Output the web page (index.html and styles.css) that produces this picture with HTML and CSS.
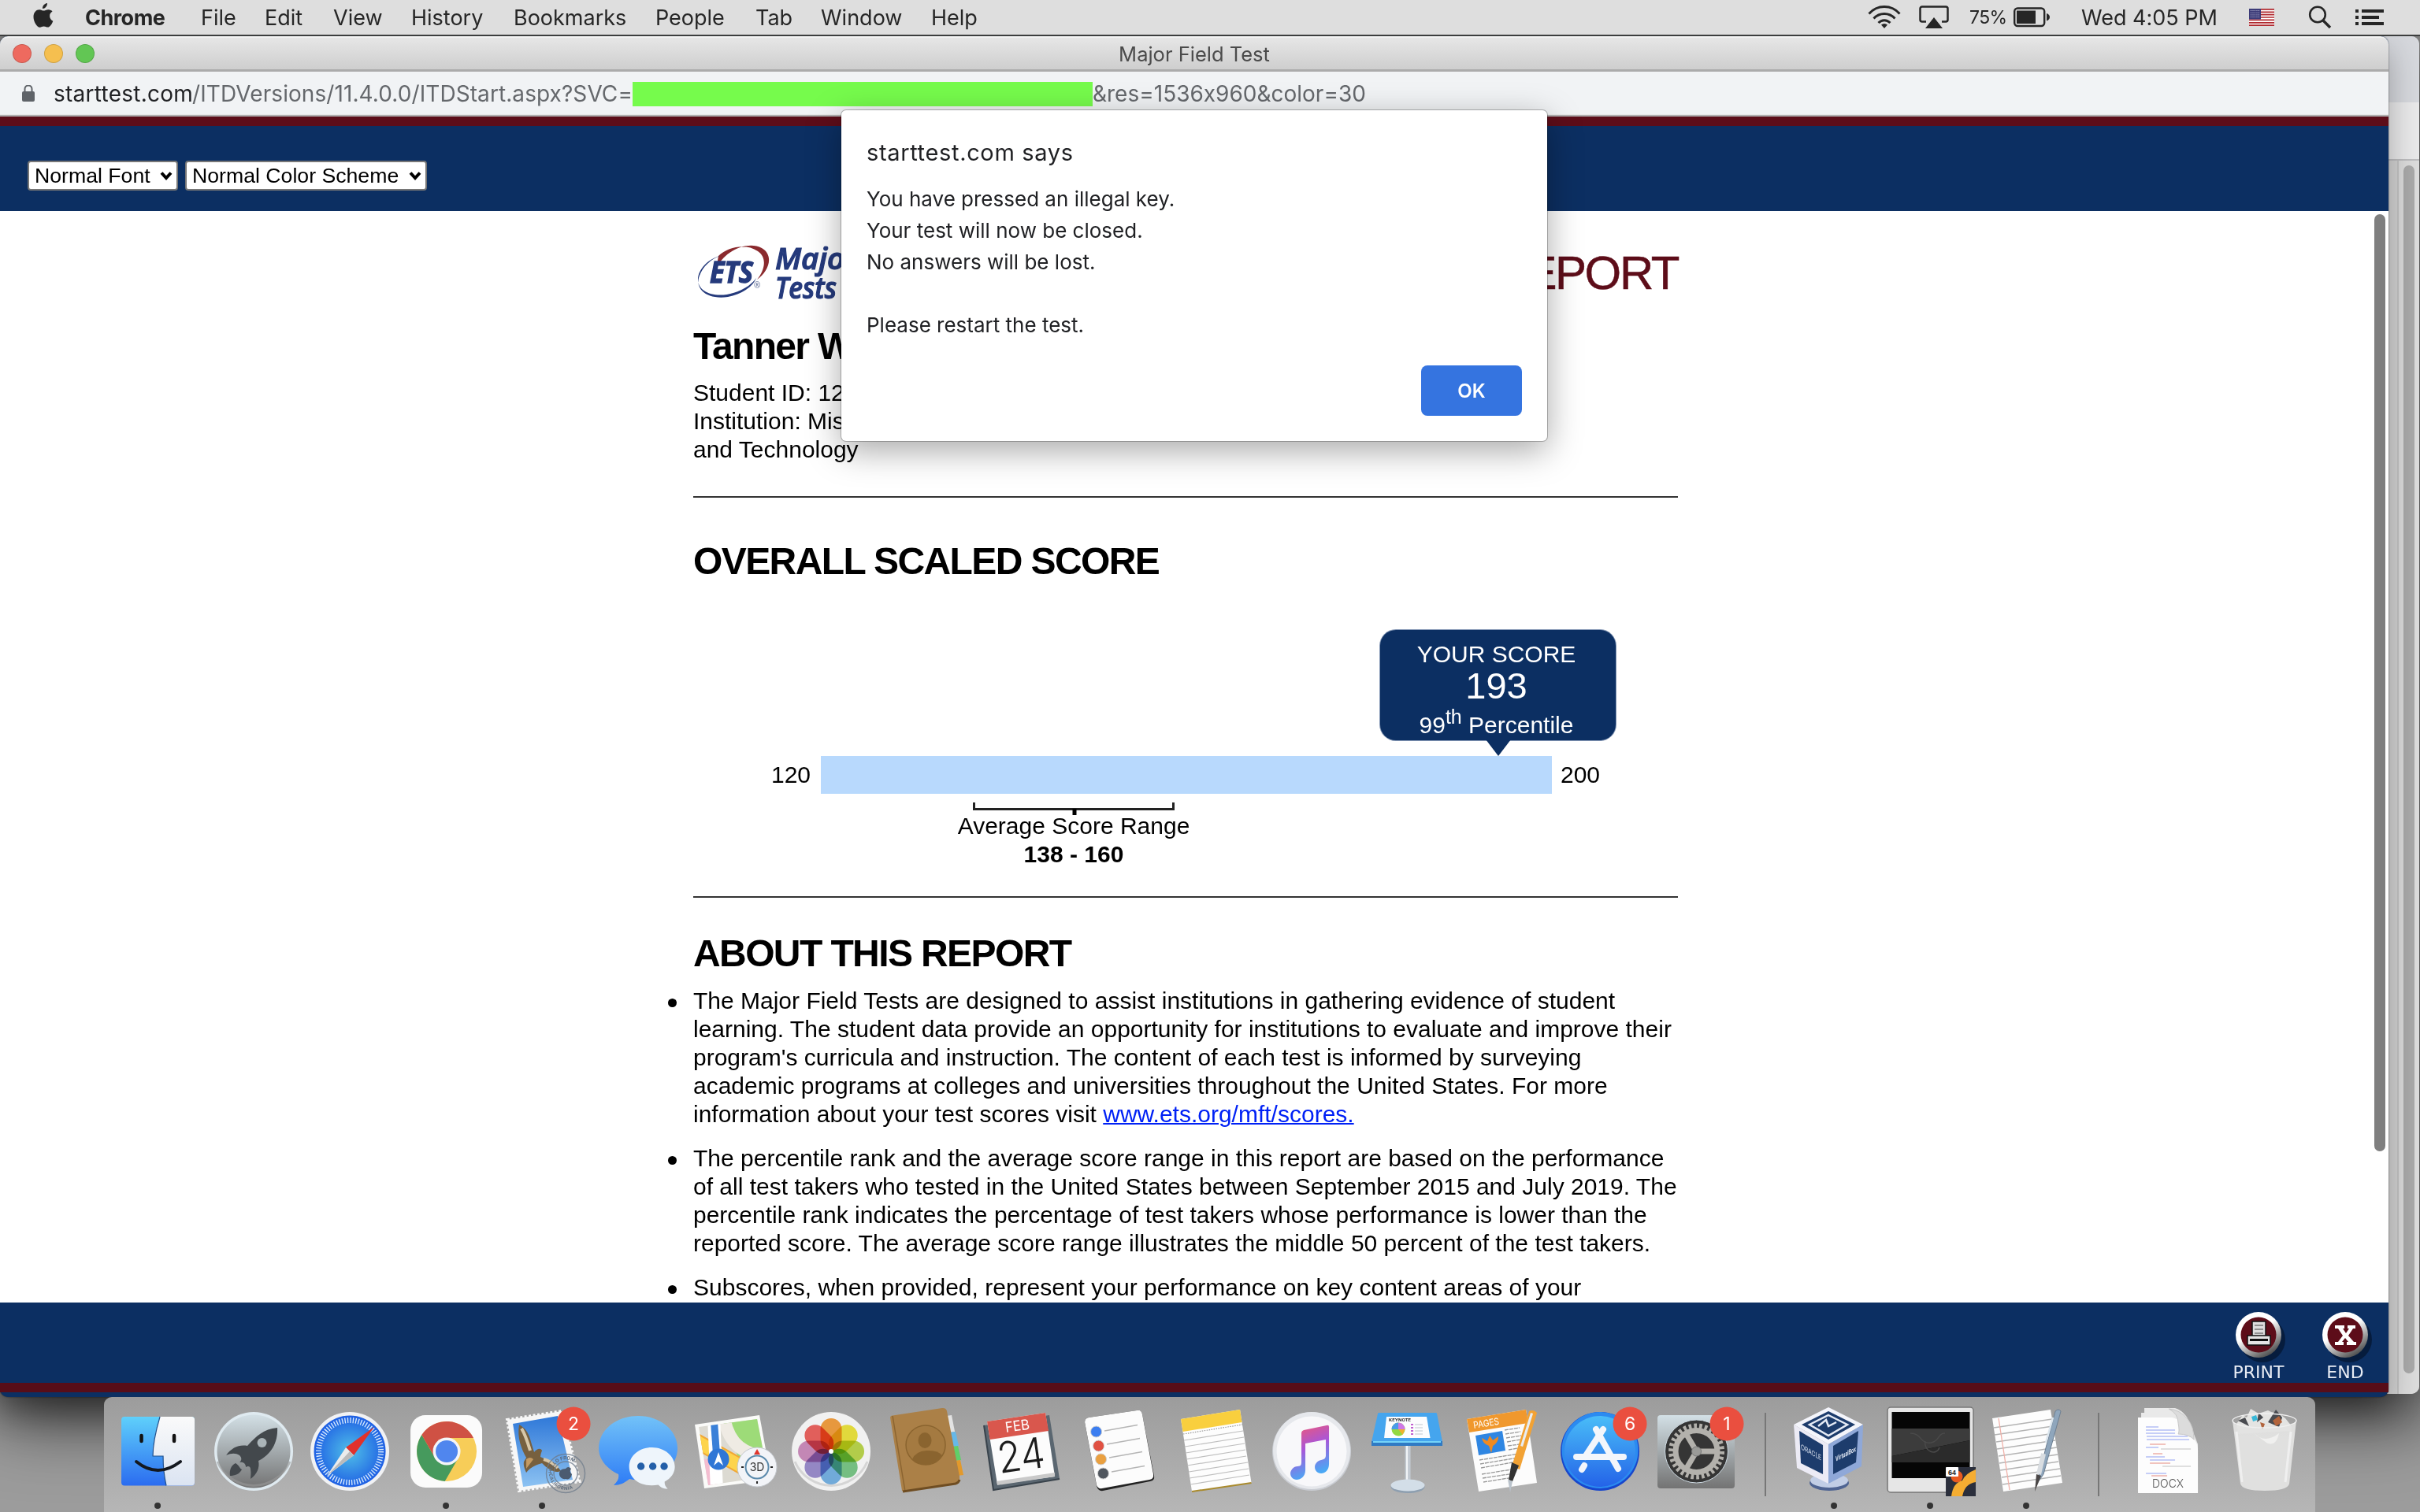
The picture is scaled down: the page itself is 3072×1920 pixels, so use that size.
FILE: index.html
```html
<!DOCTYPE html>
<html lang="en">
<head>
<meta charset="utf-8">
<title>Major Field Test</title>
<link rel="stylesheet" href="styles.css">
</head>
<body>
<header class="menubar">
  <svg class="apple" width="28" height="33" viewBox="0 0 28 33"><path d="M19 1c.2 3.600-2.600 7-6 7C12.700 4.500 15.600 1.300 19 1zM25.500 11.500c-2.200 1.400-3.500 3.300-3.400 6 .1 3 1.800 5 4.200 6.200-1.100 3.200-3.800 7.800-6.600 7.900-1.900.1-2.700-1.100-5-1.100s-3.200 1.100-5 1.200C5.800 31.800 1.500 24.500 1.500 18.500 1.500 12.500 5.200 9.200 9 9.200c2.200 0 3.800 1.400 5.400 1.400 1.500 0 3.400-1.500 6.200-1.400 2.100.1 3.900.9 4.900 2.300z" fill="#262626"/></svg>
  <nav class="menus">
    <span class="menu app">Chrome</span><span class="menu file">File</span><span class="menu edit">Edit</span><span class="menu view">View</span><span class="menu history">History</span><span class="menu bookmarks">Bookmarks</span><span class="menu people">People</span><span class="menu tab">Tab</span><span class="menu win">Window</span><span class="menu help">Help</span>
  </nav>
  <div class="status">
    <svg class="wifi" width="42" height="30" viewBox="0 0 42 30" fill="none" stroke="#262626" stroke-width="3"><path d="M1.500 10.500C12-1.500 30-1.500 40.500 10.500"/><path d="M7.500 16.500c7.500-8 19.500-8 27 0"/><path d="M13.500 22c4.500-4.500 10.500-4.500 15 0"/><path d="M21 29l-4-4.500q4-3 8 0z" fill="#262626" stroke="none"/></svg>
    <svg class="airplay" width="38" height="30" viewBox="0 0 38 30"><path d="M9 20.500H4a2.500 2.500 0 0 1-2.500-2.500V4A2.500 2.500 0 0 1 4 1.500h30A2.500 2.500 0 0 1 36.500 4v14a2.500 2.500 0 0 1-2.500 2.500h-5" fill="none" stroke="#262626" stroke-width="2.500"/><path d="M19 15l11 14H8z" fill="#262626"/></svg>
    <span class="percent">75%</span>
    <svg class="battery" width="46" height="26" viewBox="0 0 46 26"><rect x="1.200" y="1.500" width="38" height="22.500" rx="4" fill="none" stroke="#262626" stroke-width="2.400"/><rect x="4" y="4.500" width="24" height="16.500" fill="#262626"/><path d="M42 8q4 1.500 4 4.800T42 17.500z" fill="#262626"/></svg>
    <span class="clock">Wed 4:05 PM</span>
    <svg class="flag" width="32" height="22" viewBox="0 0 32 22"><rect width="32" height="22" fill="#fff"/><path d="M0 .9h32M0 4.300h32M0 7.700h32M0 11h32M0 14.400h32M0 17.800h32M0 21.100h32" stroke="#b0282e" stroke-width="1.700"/><rect width="15" height="13.500" fill="#3c3b78"/><path d="M2 2.500h12M2 5.200h12M2 7.900h12M2 10.600h12" stroke="#c9c9e0" stroke-width="1" stroke-dasharray="1 1.500"/></svg>
    <svg class="search" width="30" height="30" viewBox="0 0 30 30" fill="none" stroke="#262626"><circle cx="12" cy="11.500" r="9.800" stroke-width="2.600"/><path d="M19 19l9 9" stroke-width="3.400"/></svg>
    <svg class="list" width="36" height="22" viewBox="0 0 36 22" fill="#262626"><path d="M0 1h4v4H0zM8 1h28v4H8zM0 9h4v4H0zM8 9h22v4H8zM0 17h4v4H0zM8 17h28v4H8z"/></svg>
  </div>
</header>

<main class="desktop">
  <section class="window back-window">
    <div class="back-tabs"></div>
    <div class="back-tools"></div>
    <div class="back-body"><div class="back-track"><div class="back-thumb"></div></div></div>
  </section>

  <section class="window test-window">
    <div class="titlebar">
      <i class="light red"></i><i class="light yellow"></i><i class="light green"></i>
      <h1 class="window-title">Major Field Test</h1>
    </div>
    <div class="address">
      <svg class="lock" width="16" height="22" viewBox="0 0 16 22"><rect y="8" width="16" height="13" rx="2" fill="#5f6368"/><path d="M3.500 9V5a4.500 4.500 0 0 1 9 0v4" fill="none" stroke="#5f6368" stroke-width="2"/></svg>
      <span class="host">starttest.com</span><span class="path">/ITDVersions/11.4.0.0/ITDStart.aspx?SVC=</span><span class="redacted"></span><span class="query">&amp;res=1536x960&amp;color=30</span>
    </div>
    <div class="test-top">
      <div class="select font-select">Normal Font<svg width="16" height="12" viewBox="0 0 16 12"><path d="M2 2.500l6 6.500 6-6.500" fill="none" stroke="#000" stroke-width="4"/></svg></div>
      <div class="select color-select">Normal Color Scheme<svg width="16" height="12" viewBox="0 0 16 12"><path d="M2 2.500l6 6.500 6-6.500" fill="none" stroke="#000" stroke-width="4"/></svg></div>
    </div>
    <div class="page">
      <article class="report">
        <div class="report-head">
          <svg class="logo" width="260" height="80" viewBox="0 0 260 80">
            <path d="M24 42C32 18 64 4 82 14c16 9 9 30-6 40 10-12 13-28 1-36C62 8 40 12 27 24z" fill="#8b2a2e" transform="translate(5 -7)"/>
            <path d="M34 18C18 22 6 36 6 48c0 20 34 28 64 8 4-3 8-7 10-10-4 11-19 21-36 24C18 74 1 60 8 43c4-11 14-21 26-25z" fill="#253a7c" transform="translate(0 -1)"/>
            <text x="21" y="51" class="ets" textLength="55" lengthAdjust="spacingAndGlyphs">ETS</text>
            <text x="77" y="58" class="reg">®</text>
            <text x="104" y="34" class="mft" textLength="104" lengthAdjust="spacingAndGlyphs">Major</text>
            <text x="104" y="71" class="mft" textLength="78" lengthAdjust="spacingAndGlyphs">Tests</text>
          </svg>
          <span class="report-word">REPORT</span>
        </div>
        <h2 class="student">Tanner W</h2>
        <p class="details">Student ID: 12<br>Institution: Mis<br>and Technology</p>
        <hr>
        <h2 class="overall">OVERALL SCALED SCORE</h2>
        <div class="chart">
          <div class="bubble">
            <p>YOUR SCORE</p>
            <p class="score">193</p>
            <p class="rank">99<sup>th</sup> Percentile</p>
            <svg class="pointer" width="32" height="21" viewBox="0 0 32 21"><path d="M0 0h32L16 21z" fill="#0c2f62"/></svg>
          </div>
          <div class="scale"><span class="low">120</span><div class="bar"></div><span>200</span></div>
          <div class="range">
            <svg width="256" height="16" viewBox="0 0 256 16"><path d="M1.500 0v8.500h253V0" fill="none" stroke="#222" stroke-width="3"/><path d="M129 8v8" stroke="#000" stroke-width="5"/></svg>
            <p>Average Score Range</p>
            <p class="range-values">138 - 160</p>
          </div>
        </div>
        <hr>
        <h2 class="about">ABOUT THIS REPORT</h2>
        <ul>
          <li>The Major Field Tests are designed to assist institutions in gathering evidence of student<br>learning. The student data provide an opportunity for institutions to evaluate and improve their<br>program's curricula and instruction. The content of each test is informed by surveying<br>academic programs at colleges and universities throughout the United States. For more<br>information about your test scores visit <a href="#">www.ets.org/mft/scores.</a></li>
          <li>The percentile rank and the average score range in this report are based on the performance<br>of all test takers who tested in the United States between September 2015 and July 2019. The<br>percentile rank indicates the percentage of test takers whose performance is lower than the<br>reported score. The average score range illustrates the middle 50 percent of the test takers.</li>
          <li>Subscores, when provided, represent your performance on key content areas of your</li>
        </ul>
      </article>
      <div class="page-thumb"></div>
    </div>
    <div class="test-bottom">
      <div class="round print">
        <svg width="72" height="70" viewBox="-36 -32 72 70">
          <defs><linearGradient id="rim" x1="0" y1="0" x2=".6" y2="1"><stop offset=".5" stop-color="#fff"/><stop offset="1" stop-color="#555"/></linearGradient></defs>
          <ellipse cx="5" cy="6" rx="29" ry="29" fill="#04142e" opacity=".7"/>
          <circle r="29" fill="url(#rim)"/><circle r="22.500" fill="#5d0d19"/>
          <rect x="-8" y="-17" width="17" height="19" fill="#ddd" stroke="#111" stroke-width="1.500"/><path d="M-5-12H6M-5-7H6M-5-2H6" stroke="#777" stroke-width="1.500"/>
          <rect x="-14" y="1" width="29" height="12" fill="#e4e4e4" stroke="#111" stroke-width="1.500"/><path d="M-11 6.500h23" stroke="#111" stroke-width="3"/>
        </svg>
        <span>PRINT</span>
      </div>
      <div class="round end">
        <svg width="72" height="70" viewBox="-36 -32 72 70">
          <ellipse cx="5" cy="6" rx="29" ry="29" fill="#04142e" opacity=".7"/>
          <circle r="29" fill="url(#rim)"/><circle r="22.500" fill="#5d0d19"/>
          <path d="M-13-12H-1v4h-2l4 6 4-6H3v-4h10v4h-3L4 1l7 8h3v4H2V9h2L0 4l-4 5h2v4h-11V9h4l6-8-6-9h-4z" fill="#fff"/>
        </svg>
        <span>END</span>
      </div>
    </div>
    <div class="test-stripe"></div>

    <div class="dialog" role="alertdialog">
      <h3>starttest.com says</h3>
      <p>You have pressed an illegal key.<br>Your test will now be closed.<br>No answers will be lost.<br><br>Please restart the test.</p>
      <button class="ok">OK</button>
    </div>
  </section>
</main>

<footer class="dock">
  <svg class="slot" viewBox="-61 0 122 146">
    <defs>
      <linearGradient id="finder" x1="0" y1="0" x2="0" y2="1"><stop offset="0" stop-color="#5fd0fb"/><stop offset="1" stop-color="#2b6cf0"/></linearGradient>
      <linearGradient id="white" x1="0" y1="0" x2="0" y2="1"><stop offset="0" stop-color="#fafafa"/><stop offset="1" stop-color="#dbe4f2"/></linearGradient>
      <linearGradient id="steel" x1="0" y1="0" x2="0" y2="1"><stop offset="0" stop-color="#d3e0e6"/><stop offset="1" stop-color="#737373"/></linearGradient>
      <linearGradient id="chat" x1="0" y1="0" x2="0" y2="1"><stop offset="0" stop-color="#72c2f8"/><stop offset="1" stop-color="#2e7cf6"/></linearGradient>
      <linearGradient id="store" x1="0" y1="0" x2="0" y2="1"><stop offset="0" stop-color="#49bdf8"/><stop offset="1" stop-color="#2463e8"/></linearGradient>
      <linearGradient id="note" x1="0" y1="0" x2=".3" y2="1"><stop offset="0" stop-color="#f7576b"/><stop offset=".5" stop-color="#a956d8"/><stop offset="1" stop-color="#4aa8f5"/></linearGradient>
      <linearGradient id="sky" x1="0" y1="0" x2="0" y2="1"><stop offset="0" stop-color="#2f78d8"/><stop offset="1" stop-color="#8cc2f2"/></linearGradient>
      <radialGradient id="compass"><stop offset="0" stop-color="#50c0e8"/><stop offset="1" stop-color="#1f60e4"/></radialGradient>
    </defs>
    <rect x="-46" y="25" width="93" height="87.500" rx="4" fill="url(#finder)"/>
    <path d="M3 25C-2 42-6 58-6 75H7q0 20 4 37.500h32a4 4 0 0 0 4-4V29a4 4 0 0 0-4-4z" fill="url(#white)"/>
    <path d="M3 25C-2 42-6 58-6 75H7q0 20 4 37.500" fill="none" stroke="#24528c" stroke-width="1.200"/>
    <path d="M-20.500 49v7M21 49v7" stroke="#111" stroke-width="4.500" stroke-linecap="round"/>
    <path d="M-27 82Q0 104 29 82" fill="none" stroke="#14181f" stroke-width="4" stroke-linecap="round"/>
    <circle cy="138" cx="0" r="4" fill="#333"/>
  </svg>
  <svg class="slot" viewBox="-61 0 122 146">
    <circle cy="69" r="50" fill="#dfeaf0"/><circle cy="69" r="46.500" fill="url(#steel)"/><path d="M-46 82A50 50 0 0 0 46 82" fill="none" stroke="#999" stroke-width="3" opacity=".6"/>
    <path d="M30 39C12 41 4 49-8 62c-10-2-20 2-27 12 7-3 12-3 17 0 3 3 3 6 0 9 5-1 8 2 8 6 3-2 6-1 6 3 1 5 0 8 0 12 8-6 12-14 10-23C22 73 31 58 30 39z" fill="#43484c"/>
    <path d="M-23 84c-6 3-8 9-7 16 6 0 12-2 15-8-3-1-3-5-8-8z" fill="#43484c"/><circle cx="10.500" cy="58" r="6" fill="#aab4b8"/>
  </svg>
  <svg class="slot" viewBox="-61 0 122 146">
    <circle cy="69" r="50" fill="#f1f2f4"/><circle cy="69" r="45.500" fill="url(#compass)"/>
    <circle cy="69" r="39.500" fill="none" stroke="#dcecff" stroke-width="7" stroke-dasharray="1.300 2.147"/>
    <path d="M31 38L-5 64l10 10z" fill="#e0312c"/><path d="M-29 100l24-36 10 10z" fill="#ececec"/><path d="M-29 100L0 69l5 5z" fill="#bbb"/>
  </svg>
  <svg class="slot" viewBox="-61 0 122 146">
    <rect x="-45" y="23" width="91" height="92" rx="19" fill="#fbfbfb"/>
    <g transform="translate(1 69)"><circle r="38" fill="#f7cd58"/><path d="M-31.700-20.900A38 38 0 0 0-2.300 37.900L14.700 8.500-14.700 8.500z" fill="#469a5d"/><path d="M-31.700-20.900A38 38 0 0 1 34-17H0V8.500H-14.700z" fill="#cf5144"/><circle r="17.500" fill="#f4f5f8"/><circle r="14" fill="#5086ee"/></g>
    <circle cy="138" r="4" fill="#333"/>
  </svg>
  <svg class="slot" viewBox="-61 0 122 146">
    <path d="M-44 29L25 18 47.500 107-29 119z" fill="#f7f7f7" stroke="#f7f7f7" stroke-width="4" stroke-dasharray="3 2.500"/>
    <path d="M-37 34L20 24l19 81-63 9z" fill="url(#sky)"/>
    <path d="M-29 35c9 5 13 13 15 22l4 13c3-4 8-6 10-2-1 3-2 5-2 8 10 5 20 9 26 18-8 3-16-2-24-10-6 2-14 4-20 12-2-5-4-9-3-14l3-5C-26 66-32 52-29 35z" fill="#77603f"/><path d="M-26 40c5 8 8 18 11 28M2 79c8 2 13 6 18 11" stroke="#d8c7a8" stroke-width="4" fill="none"/><path d="M-20 79q5-4 9 0l-9 12z" fill="#c49a62"/>
    <g fill="none" stroke="#6d7a8a" stroke-width="1.500" opacity=".75"><circle cx="30" cy="97" r="24.500"/><circle cx="30" cy="97" r="15"/><path id="mark" d="M12 97a18 18 0 0 0 36 0" stroke="none"/><path id="mark2" d="M12.500 97a17 17 0 0 1 35 0" stroke="none"/></g>
    <text class="postmark" dy="3"><textPath href="#mark">CALIFORNIA</textPath></text><text class="postmark"><textPath href="#mark2">HELLO FROM</textPath></text>
    <path d="M30 91q3-4 7 0-3 4 1 7-2 8-8 6-6 1-8-5-1-8 8-8z" fill="#4b5b70"/>
    <circle cx="40" cy="34" r="21.500" fill="#ea4f3f"/><text class="badge" x="40" y="42">2</text>
    <circle cy="138" r="4" fill="#333"/>
  </svg>
  <svg class="slot" viewBox="-61 0 122 146">
    <path d="M0 24c28 0 50 18 50 41S28 105 0 105c-4 0-8 0-11-1-6 5-12 8-20 8 5-5 7-9 6-14C-40 91-50 79-50 65-50 42-28 24 0 24z" fill="url(#chat)"/>
    <path d="M17.600 64c16 0 29 11 29 24.500 0 8-5 15-13 19 0 4 1 6 4 9-6 0-9-2-12-5-24 4-37-9-37-23S1.600 64 17.600 64z" fill="#eef5fb"/>
    <circle cx="3.600" cy="88" r="4.700" fill="#235fa8"/><circle cx="18.600" cy="88" r="4.700" fill="#235fa8"/><circle cx="33" cy="88" r="4.700" fill="#235fa8"/>
  </svg>
  <svg class="slot" viewBox="-61 0 122 146">
    <clipPath id="mapclip"><path d="M-46 38L28 28l14 73-76 11z"/></clipPath>
    <path d="M-51 35L31 23l15 82-85 11z" fill="#fbfbf9"/>
    <g clip-path="url(#mapclip)"><path d="M-51 20h110v100H-51z" fill="#dcdad2"/><path d="M-20 20H60V90L10 90z" fill="#9ddb78"/><path d="M-14 26C-8 60 10 74 50 78" fill="none" stroke="#efebe4" stroke-width="16"/><path d="M-60 50L40 106" stroke="#f1a735" stroke-width="20"/><path d="M-60 50L40 106" stroke="#fdd44c" stroke-width="16"/><path d="M-44 78l18 2 3 40h-18z" fill="#f3bdd0"/><path d="M-27 25l4 95" stroke="#fff" stroke-width="16"/><path d="M-27 25l4 55" stroke="#3a80d8" stroke-width="9"/></g>
    <circle cx="-21" cy="79" r="13.500" fill="#2f76d6"/><path d="M-21 70l6 17-6-5-6 5z" fill="#fff"/>
    <circle cx="28" cy="89" r="25" fill="#f2f4f8" stroke="#c4c8ce"/><circle cx="28" cy="89" r="14.500" fill="none" stroke="#5b8aac" stroke-width="2"/><path d="M28 66l4 7h-8z" fill="#e0362c"/><path d="M8 89h3M45 89h3M28 107v3" stroke="#222" stroke-width="2"/><text class="threed" x="28" y="94">3D</text>
  </svg>
  <svg class="slot" viewBox="-61 0 122 146">
    <circle cy="69" r="50" fill="#f1f1f1"/><path d="M-46 82A50 50 0 0 0 46 82" fill="none" stroke="#d5d5d5" stroke-width="3"/>
    <g class="petals" transform="translate(0 69)"><rect x="-13.500" y="-42" width="27" height="41" rx="13.500" fill="#f5a141"/><rect x="-13.500" y="-42" width="27" height="41" rx="13.500" fill="#efe63f" transform="rotate(45)"/><rect x="-13.500" y="-42" width="27" height="41" rx="13.500" fill="#bdd84e" transform="rotate(90)"/><rect x="-13.500" y="-42" width="27" height="41" rx="13.500" fill="#7cc98a" transform="rotate(135)"/><rect x="-13.500" y="-42" width="27" height="41" rx="13.500" fill="#78b4e6" transform="rotate(180)"/><rect x="-13.500" y="-42" width="27" height="41" rx="13.500" fill="#9d8fd0" transform="rotate(225)"/><rect x="-13.500" y="-42" width="27" height="41" rx="13.500" fill="#cf8fc0" transform="rotate(270)"/><rect x="-13.500" y="-42" width="27" height="41" rx="13.500" fill="#ee6460" transform="rotate(315)"/></g>
    <circle cy="69" r="3" fill="#fff"/>
  </svg>
  <svg class="slot" viewBox="-61 0 122 146">
    <path d="M24 24l7-1 4 21-7 1z" fill="#e3e3e3"/><path d="M28 45l8-1 4 18-8 1z" fill="#66b8e8"/><path d="M31 63l8-1 4 18-8 1z" fill="#60cf68"/><path d="M34 81l8-1 4 19-8 1z" fill="#e2992c"/>
    <path d="M-47 26q0-2 3-2.500L19 14q5-.5 6 4l16 83q1 7-5 9l-66 10-2-1z" fill="#ab8047"/><path d="M-44 24l16 96" stroke="#8b6431" stroke-width="1.500"/><path d="M-31 120l67-10q4-1 5-5" fill="none" stroke="#6f4d22" stroke-width="3"/>
    <circle cx="-2" cy="61" r="25" fill="#a47a41" stroke="#8a642f" stroke-width="1.500"/><ellipse cx="-3" cy="55" rx="8.500" ry="10" fill="#8a642f"/><path d="M-19 79q4-10 18-11t20 6q-8 11-20 12-12 0-18-7z" fill="#8a642f"/>
  </svg>
  <svg class="slot" viewBox="-61 0 122 146">
    <path d="M-50 36l83-13 13 81-84 14z" fill="#5a6670"/><path d="M-50 36l12 82 84-14" fill="none" stroke="#39434c" stroke-width="2"/>
    <path d="M-46 31l74-11 12 81-73 10z" fill="#fcfcfc"/><path d="M-34 107l74-11v5l-73 11z" fill="#c9c9c9"/><path d="M-46 31l74-11 4 23-74.500 11z" fill="#d9574d"/>
    <text class="month" transform="translate(-22 45) rotate(-8)" textLength="31" lengthAdjust="spacingAndGlyphs">FEB</text><text class="day" transform="translate(-30 97) rotate(-8)" textLength="60" lengthAdjust="spacingAndGlyphs">24</text>
  </svg>
  <svg class="slot" viewBox="-61 0 122 146">
    <path d="M-44 32q0-5 5-6l61-9q6-1 7 5l15 78q1 6-5 7l-60 12q-6 1-8-6z" fill="#222"/><path d="M-44 32q0-5 5-6l61-9q6-1 7 5l14 76q1 6-5 7l-60 11q-5 1-7-4z" fill="#fcfcfc"/>
    <g stroke="#d0d0d0" stroke-width="1"><circle cx="-29.500" cy="44" r="7" fill="#3c7ef0"/><circle cx="-26.500" cy="62" r="7" fill="#e05142"/><circle cx="-23.500" cy="79" r="7" fill="#eaa040"/><circle cx="-20.600" cy="97" r="7" fill="#50565e"/></g>
    <path d="M-19 43l42-7.500M-16 60l42-7.500M-13 77l42-7.500M-10 95l42-7.500" stroke="#b5b5b5" stroke-width="1.300"/>
  </svg>
  <svg class="slot" viewBox="-61 0 122 146">
    <path d="M-44 28l75-12 14.500 93L-30 120z" fill="#fdfdfd"/><path d="M-44 28l75-12 2.500 16-75 12z" fill="#f9cf3e"/><path d="M-30 120l75.500-11" stroke="#a98a2c" stroke-width="2"/>
    <path d="M-41 47l75-12" stroke="#999" stroke-width="1.200" stroke-dasharray="1.500 1.500"/><path d="M-40 55l75-12M-39 63l75-12M-38 71l75-12M-37 79l75-12M-36 87l75-12M-34 95l75-12M-33 103l75-12M-32 111l75-12" stroke="#bfbfbf" stroke-width="1.200"/>
  </svg>
  <svg class="slot" viewBox="-61 0 122 146">
    <circle cy="69" r="50" fill="#c9ccd2"/><circle cy="68" r="49" fill="#e6e8ec"/><circle cy="69" r="44.500" fill="#f8f8fa"/>
    <path d="M-13 46q0-3 3-4l29-6q3-1 3 2v47c0 8-5 12-10 12s-8-4-8-8 3-8 8-9 6-3 6-7V54l-26 5v34c0 8-6 12-11 12s-8-4-8-8 4-9 9-9 5-3 5-6z" fill="url(#note)"/>
  </svg>
  <svg class="slot" viewBox="-61 0 122 146">
    <rect x="-3.500" y="60" width="7" height="54" fill="#c3cad2"/><path d="M-1 60v54" stroke="#f2f5f8" stroke-width="2"/><ellipse cy="114" rx="21.500" ry="8" fill="#8e9fb0"/><ellipse cy="112" rx="21.500" ry="7.500" fill="#d3dee8"/>
    <path d="M-38 21q0-1 2-1h71q2 0 2 1l7 36v5H-46v-5z" fill="#45a5ee"/><path d="M-46 56h90v6H-46z" fill="#2f7ac4"/><path d="M-44 57h86" stroke="#74d3f8" stroke-width="2"/>
    <path d="M-27 25h51l4.500 27H-30z" fill="#fcfdfe"/><text class="keynote" x="-24" y="31" textLength="28" lengthAdjust="spacingAndGlyphs">KEYNOTE</text>
    <circle cx="-12" cy="41" r="8.500" fill="#93d940"/><path d="M-12 41v-8.500a8.500 8.500 0 0 0-8.500 8.500z" fill="#4b9be8"/><path d="M-12 41v-8.500a8.500 8.500 0 0 1 8.500 8.500z" fill="#cf79e6"/><path d="M-12 41h8.500l-3 7z" fill="#f0b02d"/><path d="M4 35h3M4 39h3M4 43h3M4 47h3" stroke="#c060d0" stroke-width="2"/><path d="M9 35h10M9 39h10M9 43h10M9 47h10" stroke="#c0c7cf"/>
  </svg>
  <svg class="slot" viewBox="-61 0 122 146">
    <path d="M-47 28l75-12 14 93-74 11z" fill="#fcfcfc"/><path d="M-47 28l75-12 3 17-75 12z" fill="#f0982d"/><text class="pages" transform="translate(-38 40) rotate(-9)" textLength="33" lengthAdjust="spacingAndGlyphs">PAGES</text>
    <path d="M-36 49l34-6 4 25-34 6z" fill="#2f86e2"/><path d="M-28 52l7 4 3-7 4 6 7-5q0 8-7 12l-2 9-3-9q-8-3-9-10z" fill="#f08a20"/>
    <path d="M1 42l19-3M2 47l19-3M3 52l19-3M4 57l17-3M5 62l15-2M6 67l12-2M-31 80l50-8M-30 85l48-8M-29 90l46-8M-28 98l44-7M-27 103l40-6M-26 108l38-6" stroke="#999" stroke-width="1.300" stroke-dasharray="5 1"/>
    <path d="M32 18q6-3 10 2L20 92l-10-4z" fill="#f2a234"/><path d="M34 20L21 62l3 1 13-42z" fill="#e8edf2"/><path d="M19 87l-9-4-4 22 5 2z" fill="#333"/><path d="M5 105l6 2-3 14z" fill="#b9c2cb"/>
  </svg>
  <svg class="slot" viewBox="-61 0 122 146">
    <circle cy="69" r="50" fill="#1746cc"/><circle cy="67.500" r="48.500" fill="#2b8bf0"/><circle cy="69" r="45" fill="url(#store)"/>
    <g stroke="#f3f6fb" stroke-width="8" stroke-linecap="round"><path d="M-30 76h60"/><path d="M4 41l-23 35"/><path d="M-5 41l28 50"/><path d="M-20 87l-3 5"/></g>
    <circle cx="38" cy="34" r="21.500" fill="#ea4f3f"/><text class="badge" x="38" y="42">6</text>
  </svg>
  <svg class="slot" viewBox="-61 0 122 146">
    <rect x="-50" y="23" width="98" height="93" rx="4" fill="url(#steel)"/><circle cx="-.5" cy="69" r="40" fill="#353535" stroke="#cfdbe3" stroke-width="1"/>
    <g transform="translate(-.5 69)" stroke="#b3b1ac" fill="none"><circle r="32" stroke-width="7" stroke-dasharray="3.600 3.100"/><circle r="26.500" stroke-width="7"/><path d="M0 0h26M0 0l-13-22M0 0l-13 22" stroke-width="7"/><circle r="6" fill="#9b9b98" stroke="#777" stroke-width="1"/></g>
    <circle cx="38" cy="34" r="21.500" fill="#ea4f3f"/><text class="badge" x="38" y="42">1</text>
  </svg>
  <i class="divider"></i>
  <svg class="slot" viewBox="-61 0 122 146">
    <ellipse cx="-6" cy="109" rx="25" ry="10" fill="#4f6492"/><ellipse cx="-6" cy="106" rx="24" ry="9" fill="#c2cee6"/>
    <path d="M-7 13l44 22-44 25-44-25z" fill="#f4f5fb"/><path d="M-51 35l44 25v50l-40-20z" fill="#ecebf5"/><path d="M37 35L-7 60v50l42-22z" fill="#8fa8d8"/>
    <path d="M-7 18l34 17-34 19-34-19z" fill="#1d3c6c"/><path d="M-44 43l30 18v37l-28-14z" fill="#1d3c6c"/><path d="M31 43L-1 62v36l29-15z" fill="#1d3c6c"/>
    <path d="M-7 23l24 12-24 14-24-14zM-20 37l10-8 3 8 10-5" fill="none" stroke="#e6ebf5" stroke-width="2.500"/>
    <text class="oracle" transform="translate(-42 66) skewY(29)" textLength="26" lengthAdjust="spacingAndGlyphs">ORACLE</text><text class="vbox" transform="translate(2 82) skewY(-27)" textLength="26" lengthAdjust="spacingAndGlyphs">VirtualBox</text>
    <circle cy="138" r="4" fill="#333"/>
  </svg>
  <svg class="slot" viewBox="-61 0 122 146">
    <rect x="-54" y="13" width="109" height="108" rx="4" fill="#e6e6e6" stroke="#777" stroke-width="1.500"/><rect x="-48.500" y="19" width="99" height="84" fill="#060606"/><path d="M-48.500 40h99v15l-99 20z" fill="#3c3c3c"/><path d="M-48.500 75l99-20v28h-99z" fill="#2b2b2b"/><path d="M-25 46c15 0 12 14 26 12 12-2 8-12 18-12M-6 56c-3 12 14 20 18 8" fill="none" stroke="#4a4a4a" stroke-width="1.500"/>
    <rect x="20" y="89" width="38" height="37" fill="#2b2f3c"/><circle cx="34" cy="101" r="7.500" fill="#e85a20"/><path d="M58 92v16q-14 2-17 18H27q2-17 14-20 4-9 17-14z" fill="#f5ad32"/><rect x="20" y="89" width="16" height="12" rx="1" fill="#fff"/><text class="bits" x="28" y="99">64</text>
    <circle cy="138" r="4" fill="#333"/>
  </svg>
  <svg class="slot" viewBox="-61 0 122 146">
    <path d="M-43 27l74-11 15 93-75 11z" fill="#fdfdfd"/><path d="M-41 39l74-11M-40 48l74-11M-38 57l74-11M-37 66l74-11M-35 75l74-11M-34 84l74-11M-33 93l74-11M-31 102l74-11M-30 111l74-11" stroke="#b4b4b4" stroke-width="1.300"/><path d="M-35 27l14 91" stroke="#efb0a8" stroke-width="1.300"/>
    <path d="M37 18q4-4 7 0L22 98l-9 13z" fill="#8fa6bc" stroke="#6c7f92" stroke-width="1"/><path d="M34 26L25 58" stroke="#dce6ee" stroke-width="2.500"/><path d="M22 72l-6 26" stroke="#d9dde1" stroke-width="6"/><path d="M13 98l6 2-8 20z" fill="#4a4646"/>
    <circle cy="138" r="4" fill="#333"/>
  </svg>
  <i class="divider second"></i>
  <svg class="slot" viewBox="-61 0 122 146">
    <path d="M-31 14H8q16 5 22 28l7 18v60h-76V26h4v-6h4z" fill="#e9e9e9"/><path d="M-39 26H4c16 4 18 12 20 24 9 2 13 8 13 18v54h-76z" fill="#fdfdfd"/><path d="M0 15q12 6 12 18 2 11 0 14 14 0 20 7 0-16-8-26Q14 16 0 15z" fill="#dcdcdc" stroke="#c8c8c8"/>
    <path d="M-29 38h16M-29 42H8M-29 46H8M-28 50h52M-28 54h54M-29 64h16M-29 76h24M-24 80h32M-29 97h26" stroke="#b4bff5" stroke-width="1.300"/><path d="M-24 60h20M-20 72h12M-24 84h26M-22 100h20" stroke="#edb0a8" stroke-width="1.300"/><path d="M-10 66h38M-8 88h36" stroke="#d5d5d5" stroke-width="1.300"/>
    <text class="docx" x="-21" y="115" textLength="40" lengthAdjust="spacingAndGlyphs">DOCX</text>
  </svg>
  <svg class="slot" viewBox="-61 0 122 146">
    <path d="M-36 34l8-11 5 3 5-11 10 6 12-4 4 2 10 2 8 6 8 10v6l-68 4z" fill="#e4e4e2"/><path d="M-34 30l9-4 5 11zM-8 20l6 6-8 6zM4 32l10-16 8 10-4 12z" fill="#494b50"/><path d="M-17 25l6-2 2 6-6 2z" fill="#38b8d8"/><path d="M10 30l8-6 4 8-8 5zM-6 32l6 2-3 8z" fill="#b2643c"/>
    <path d="M-41 30q2 10 40 10t41-10l-9 80q-2 9-31 9t-31-9z" fill="#e3e3e1" opacity=".95"/><path d="M-36 44l7 64M33 44l-7 64" stroke="#f6f6f6" stroke-width="3" opacity=".7"/><path d="M-14 46q14 14 32 0-4 18-16 12z" fill="#f0f0ef"/><ellipse cx="-.5" cy="30" rx="40.500" ry="9" fill="none" stroke="#f0f0f0" stroke-width="1.500"/>
  </svg>
</footer>
</body>
</html>
```

FILE: styles.css
```css
* { box-sizing: border-box; }

body {
  margin: 0;
  width: 3072px;
  height: 1920px;
  overflow: hidden;
  position: relative;
  background: #9c9c9c;
  font-family: Inter, Roboto, sans-serif;
  font-feature-settings: "calt" 0;
}

h1, h2, h3, p, ul { margin: 0; padding: 0; }
svg { display: block; flex: none; }

/* Menu bar */
.menubar {
  position: relative;
  z-index: 1;
  display: flex;
  align-items: center;
  height: 46px;
  padding: 0 46px 0 41px;
  background: #dedede;
  border-bottom: 2px solid #3c3e3e;
  font-size: 27px;
  line-height: 44px;
  color: #262626;
  white-space: nowrap;
}
.apple { margin-top: -6px; }
.menus { display: flex; margin-left: 39px; padding-top: 1px; }
.app { width: 147px; font-weight: 700; letter-spacing: -0.5px; }
.file { width: 81px; }
.edit { width: 87px; }
.view { width: 99px; }
.history { width: 130px; }
.bookmarks { width: 180px; }
.people { width: 127px; }
.tab { width: 83px; }
.win { width: 140px; }
.status { display: flex; align-items: center; margin-left: auto; }
.airplay { margin-left: 23px; }
.percent { width: 56px; margin-left: 26px; font-size: 23px; letter-spacing: -0.6px; }
.clock { width: 176px; margin-left: 40px; padding-top: 1px; }
.flag { margin-left: 37px; }
.search { margin-left: 43px; }
.list { margin-left: 30px; }

/* Windows */
.desktop {
  position: absolute;
  inset: 46px 0 0 0;
  background: #9c9c9c;
}
.window {
  position: absolute;
  top: 0;
  display: flex;
  flex-direction: column;
  border-radius: 10px;
}
.back-window {
  left: 0;
  width: 3071px;
  height: 1724px;
  overflow: hidden;
  background: #d4d4d4;
  box-shadow: 0 20px 90px 10px rgba(0, 0, 0, .75);
}
.back-tabs { height: 84px; background: #d6d8dd; }
.back-tools { height: 74px; background: #e9e9ea; border-bottom: 2px solid #bdbdbf; }
.back-body { flex: 1; display: flex; justify-content: flex-end; }
.back-track {
  width: 28px;
  padding: 6px 6px 26px;
  background: #dcdcdc;
  border-left: 2px solid #c3c3c3;
  display: flex;
}
.back-thumb { flex: 1; border-radius: 8px; background: #a9a9a9; }

.test-window {
  left: 0;
  width: 3032px;
  height: 1728px;
  background: #0c2f62;
  box-shadow: 0 16px 40px rgba(0, 0, 0, .3), 0 0 2px rgba(0, 0, 0, .6);
}
.titlebar {
  position: relative;
  display: flex;
  align-items: center;
  gap: 16px;
  height: 45px;
  padding-left: 16px;
  border-radius: 10px 10px 0 0;
  border-top: 2px solid #f3f3f3;
  border-bottom: 3px solid #ababab;
  background: linear-gradient(#e6e6e6, #cecece);
}
.light { width: 24px; height: 24px; border-radius: 50%; border: 1px solid rgba(0, 0, 0, .15); }
.red { background: #ee6a5f; }
.yellow { background: #f5bf4f; }
.green { background: #62c654; }
.window-title {
  position: absolute;
  inset: 0;
  text-align: center;
  font-size: 25.5px;
  font-weight: 400;
  line-height: 42px;
  color: #4b4b4b;
}
.address {
  display: flex;
  align-items: center;
  height: 57px;
  padding-left: 28px;
  background: #f1f3f5;
  border-bottom: 2px solid #b0b0b0;
  box-shadow: inset 0 -1px 0 #e8e8e8;
  font-size: 28px;
  line-height: 54px;
  color: #65686c;
  white-space: nowrap;
}
.host { width: 176px; margin-left: 24px; color: #202124; letter-spacing: 0.25px; }
.path { width: 559px; letter-spacing: 0.08px; }
.redacted { width: 584px; height: 31px; margin-top: 1px; background: #76fb4c; }
.test-top {
  display: flex;
  gap: 9px;
  height: 120px;
  padding: 44px 0 0 35px;
  background: #0c2f62;
  border-top: 12px solid #5d0d19;
}
.select {
  display: flex;
  align-items: center;
  justify-content: space-between;
  height: 38px;
  padding: 0 5px 0 7px;
  border: 2px solid #767676;
  border-radius: 4px;
  background: #fff;
  color: #000;
  font: 26.67px "Liberation Sans", Arial, sans-serif;
  white-space: nowrap;
}
.font-select { width: 191px; }
.color-select { width: 307px; }

/* Report */
.page {
  position: relative;
  height: 1386px;
  overflow: hidden;
  background: #fff;
  font: 30px/36px "Liberation Sans", Arial, sans-serif;
  color: #000;
}
.report { width: 1250px; margin-left: 880px; padding-top: 39px; white-space: nowrap; }
.report-head { display: flex; justify-content: space-between; height: 80px; line-height: 80px; }
.logo { margin-top: 1px; }
.report-word { color: #5d0d19; font-size: 60px; letter-spacing: -2.4px; -webkit-text-stroke: 0.5px #5d0d19; }
.ets { font: italic 700 38px "Open Sans", sans-serif; fill: #253a7c; stroke: #253a7c; stroke-width: 1.4; }
.reg { font: 10px "Open Sans", sans-serif; fill: #53628f; }
.mft { font: italic 600 38px "Open Sans", sans-serif; fill: #253a7c; stroke: #253a7c; stroke-width: 1.2; }
.report h2 { font-size: 48px; font-weight: 700; line-height: 60px; letter-spacing: -1.6px; }
.report .student { margin-top: 23px; letter-spacing: -1.7px; }
.details { margin-top: 11px; }
hr { height: 2px; margin: 0; border: 0; background: #333; }
.details + hr { margin-top: 41px; }
.overall { margin-top: 51px; }
.chart { height: 395px; padding-top: 57px; }
.bubble {
  position: relative;
  width: 299px;
  height: 140px;
  margin-left: 872px;
  padding: 13px 4px 0 0;
  border-radius: 20px;
  background: #0c2f62;
  box-shadow: 0 0 0 1px #8497b5;
  color: #fff;
  text-align: center;
}
.score { font-size: 47px; line-height: 44px; }
.rank { margin-top: 10px; }
.rank sup { font-size: 25px; line-height: 0; vertical-align: 12px; }
.pointer { position: absolute; left: 134px; top: 139px; }
.scale { display: flex; align-items: center; height: 48px; margin-top: 20px; }
.low { width: 162px; padding-left: 99px; }
.bar { width: 928px; height: 48px; margin-right: 11px; background: #b8d9fd; }
.range { width: 256px; margin: 11px 0 0 355px; display: flex; flex-direction: column; align-items: center; }
.range p:first-of-type { margin-top: -4px; }
.range-values { font-weight: 700; }
.about { margin-top: 41px; }
.report ul { margin-top: 12px; list-style: none; }
.report li { position: relative; margin-bottom: 20px; }
.report li::before {
  content: "";
  position: absolute;
  left: -32px;
  top: 15px;
  width: 11px;
  height: 11px;
  border-radius: 50%;
  background: #000;
}
.report a { color: #0021f5; text-decoration-thickness: 2px; }
.page-thumb {
  position: absolute;
  right: 4px;
  top: 4px;
  width: 14px;
  height: 1190px;
  border-radius: 7px;
  background: #7f7f7f;
}

.test-bottom {
  display: flex;
  justify-content: flex-end;
  gap: 38px;
  height: 102px;
  padding: 9px 19px 0 0;
}
.round {
  width: 72px;
  display: flex;
  flex-direction: column;
  align-items: center;
  color: #e8ecf4;
  font: 22px/20px "DejaVu Sans", sans-serif;
}
.test-stripe { height: 12px; background: #580d18; }

/* Alert */
.dialog {
  position: absolute;
  left: 1068px;
  top: 94px;
  width: 896px;
  height: 420px;
  padding: 34px 32px 32px;
  display: flex;
  flex-direction: column;
  border-radius: 6px;
  background: #fff;
  box-shadow: 0 0 0 1px rgba(0, 0, 0, .25), 0 12px 44px rgba(0, 0, 0, .35);
  color: #202124;
  white-space: nowrap;
}
.dialog h3 { font-size: 29px; font-weight: 400; line-height: 40px; letter-spacing: 0.65px; }
.dialog p { margin-top: 19px; font-size: 26px; line-height: 40px; }
.ok {
  width: 128px;
  height: 64px;
  margin: auto 0 0 auto;
  border: 0;
  border-radius: 8px;
  background: #3574e0;
  color: #fff;
  font: 600 24px Inter, sans-serif;
}

/* Dock */
.dock {
  position: absolute;
  left: 132px;
  top: 1774px;
  width: 2807px;
  height: 146px;
  padding-left: 7px;
  display: flex;
  border-radius: 10px 10px 0 0;
  background: linear-gradient(#9c9c9c, #b6b6b6);
}
.slot { width: 122.1px; height: 146px; overflow: visible; }
.divider { flex: none; width: 2px; height: 106px; margin: 20px 25px; background: #777; }
.second { margin: 20px 27px 0 30px; }
.petals rect { mix-blend-mode: multiply; }
.badge { font: 23px Inter, sans-serif; fill: #fff; text-anchor: middle; }
.postmark { font: 700 6px Inter, sans-serif; fill: #5d6a7a; }
.threed { font: 14px Inter, sans-serif; fill: #333; text-anchor: middle; }
.month { font: 18px Inter, sans-serif; fill: #fff; }
.day { font: 300 54px Inter, sans-serif; fill: #1c1c1c; }
.keynote { font: 700 5px Inter, sans-serif; fill: #222; }
.pages { font: 12px Inter, sans-serif; fill: #fff; }
.oracle { font: 9px Inter, sans-serif; fill: #dfe6f2; }
.vbox { font: 700 9px Inter, sans-serif; fill: #dfe6f2; }
.bits { font: 700 9px "Liberation Sans", sans-serif; fill: #222; text-anchor: middle; }
.docx { font: 300 15px Inter, sans-serif; fill: #555; }
```
